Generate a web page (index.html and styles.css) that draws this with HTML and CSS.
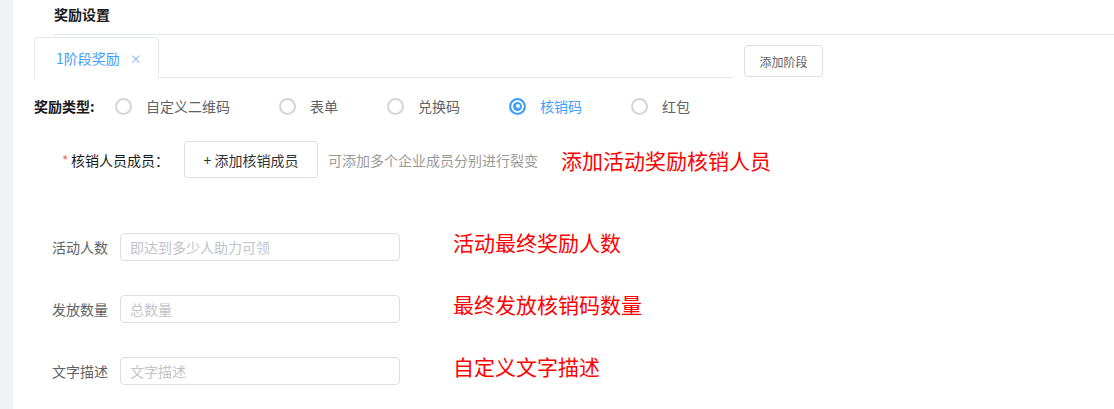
FILE: index.html
```html
<!DOCTYPE html>
<html lang="zh-CN">
<head>
<meta charset="utf-8">
<title>奖励设置</title>
<link rel="stylesheet" href="styles.css">
</head>
<body>
<div class="page">
  <aside class="strip"></aside>
  <main class="main">
    <div class="title">奖励设置</div>
    <div class="tabs-row">
      <div class="tabs-nav">
        <div class="tab active">1阶段奖励<span class="close">×</span></div>
        <div class="tabs-fill"></div>
      </div>
      <button class="btn-add-stage" type="button">添加阶段</button>
    </div>
    <div class="type-row">
      <span class="type-label">奖励类型:</span>
      <label class="radio"><span class="radio-dot"></span><span class="radio-text">自定义二维码</span></label>
      <label class="radio"><span class="radio-dot"></span><span class="radio-text">表单</span></label>
      <label class="radio"><span class="radio-dot"></span><span class="radio-text">兑换码</span></label>
      <label class="radio checked"><span class="radio-dot"></span><span class="radio-text">核销码</span></label>
      <label class="radio"><span class="radio-dot"></span><span class="radio-text">红包</span></label>
    </div>
    <div class="member-row">
      <div class="member-label"><span class="req">*</span>核销人员成员：</div>
      <button class="btn-add-member" type="button">+ 添加核销成员</button>
      <span class="hint">可添加多个企业成员分别进行裂变</span>
      <span class="note">添加活动奖励核销人员</span>
    </div>
    <div class="field-row first">
      <span class="field-label">活动人数</span>
      <input class="input" type="text" placeholder="即达到多少人助力可领">
      <span class="field-note">活动最终奖励人数</span>
    </div>
    <div class="field-row">
      <span class="field-label">发放数量</span>
      <input class="input" type="text" placeholder="总数量">
      <span class="field-note">最终发放核销码数量</span>
    </div>
    <div class="field-row">
      <span class="field-label">文字描述</span>
      <input class="input" type="text" placeholder="文字描述">
      <span class="field-note">自定义文字描述</span>
    </div>
  </main>
</div>
</body>
</html>
```

FILE: styles.css
```css
html, body {
  margin: 0;
  padding: 0;
  background: #fff;
  font-family: "Noto Sans CJK SC", "Noto Sans", sans-serif;
  font-size: 14px;
  color: #606266;
}

.page {
  display: flex;
  min-height: 409px;
}

.strip {
  flex: none;
  width: 13px;
  background: #f0f2f5;
}

.main {
  flex: 1;
  padding-left: 21px;
}

.title {
  margin-left: 20px;
  height: 35px;
  box-sizing: border-box;
  border-bottom: 1px solid #e4e7ed;
  font-size: 14px;
  font-weight: bold;
  line-height: 29px;
  color: #1a1a1a;
}

.tabs-row {
  display: flex;
  align-items: flex-start;
  margin-top: 2px;
}

.tabs-nav {
  display: flex;
  width: 699px;
}

.tab {
  flex: none;
  height: 41px;
  box-sizing: border-box;
  border: 1px solid #e4e7ed;
  border-bottom: none;
  border-radius: 4px 4px 0 0;
  padding: 0 16px 0 21px;
  line-height: 40px;
  font-size: 14px;
  color: #409eff;
  white-space: nowrap;
}

.tab .close {
  margin-left: 10px;
  font-size: 12px;
  color: #7fb6f0;
}

.tabs-fill {
  flex: 1;
  height: 41px;
  box-sizing: border-box;
  border-bottom: 1px solid #e4e7ed;
}

.btn-add-stage {
  flex: none;
  margin-left: 11px;
  margin-top: 8px;
  width: 79px;
  height: 32px;
  padding: 0;
  border: 1px solid #dcdfe6;
  border-radius: 4px;
  background: #fff;
  font-family: inherit;
  font-size: 12px;
  color: #606266;
}

.type-row {
  display: flex;
  align-items: center;
  height: 24px;
  margin-top: 16px;
}

.type-label {
  width: 81px;
  flex: none;
  font-weight: bold;
  color: #1a1a1a;
  white-space: nowrap;
}

.radio {
  flex: none;
  display: flex;
  align-items: center;
  margin-right: 49px;
}

.radio-dot {
  flex: none;
  position: relative;
  width: 17px;
  height: 17px;
  box-sizing: border-box;
  border: 2px solid #d3d4d6;
  border-radius: 50%;
  background: #fff;
  margin-right: 14px;
}

.radio-text {
  color: #606266;
  white-space: nowrap;
}

.radio.checked .radio-dot {
  border-color: #409eff;
  background: #409eff;
  box-shadow: inset 0 0 0 2px #fff;
}

.radio.checked .radio-dot::after {
  content: "";
  position: absolute;
  left: 50%;
  top: 50%;
  width: 4px;
  height: 4px;
  margin: -2px 0 0 -2px;
  border-radius: 50%;
  background: #fff;
}

.radio.checked .radio-text {
  color: #409eff;
}

.member-row {
  display: flex;
  align-items: center;
  margin-top: 23px;
  padding-left: 28px;
}

.member-label {
  flex: none;
  width: 122px;
  color: #1a1a1a;
  white-space: nowrap;
}

.req {
  display: inline-block;
  width: 9px;
  color: #f56c6c;
}

.btn-add-member {
  flex: none;
  width: 134px;
  height: 37px;
  padding: 0;
  border: 1px solid #dcdfe6;
  border-radius: 3px;
  background: #fff;
  font-family: inherit;
  font-size: 14px;
  color: #333;
}

.hint {
  margin-left: 10px;
  color: #999;
  white-space: nowrap;
}

.note {
  margin-left: 23px;
  font-size: 21px;
  line-height: 30px;
  color: #f00;
  white-space: nowrap;
}

.field-row {
  display: flex;
  align-items: center;
  height: 28px;
  margin-top: 34px;
  padding-left: 18px;
}

.field-row.first {
  margin-top: 55px;
}

.field-label {
  flex: none;
  width: 56px;
  margin-right: 12px;
  color: #606266;
  white-space: nowrap;
}

.input {
  flex: none;
  width: 280px;
  height: 28px;
  box-sizing: border-box;
  margin: 0;
  padding: 0 9px;
  border: 1px solid #dcdfe6;
  border-radius: 4px;
  font-family: inherit;
  font-size: 14px;
  color: #606266;
  outline: none;
}

.input::placeholder {
  color: #c0c4cc;
}

.field-note {
  margin-left: 53px;
  margin-bottom: 10px;
  font-size: 21px;
  line-height: 18px;
  color: #f00;
  white-space: nowrap;
}
```
